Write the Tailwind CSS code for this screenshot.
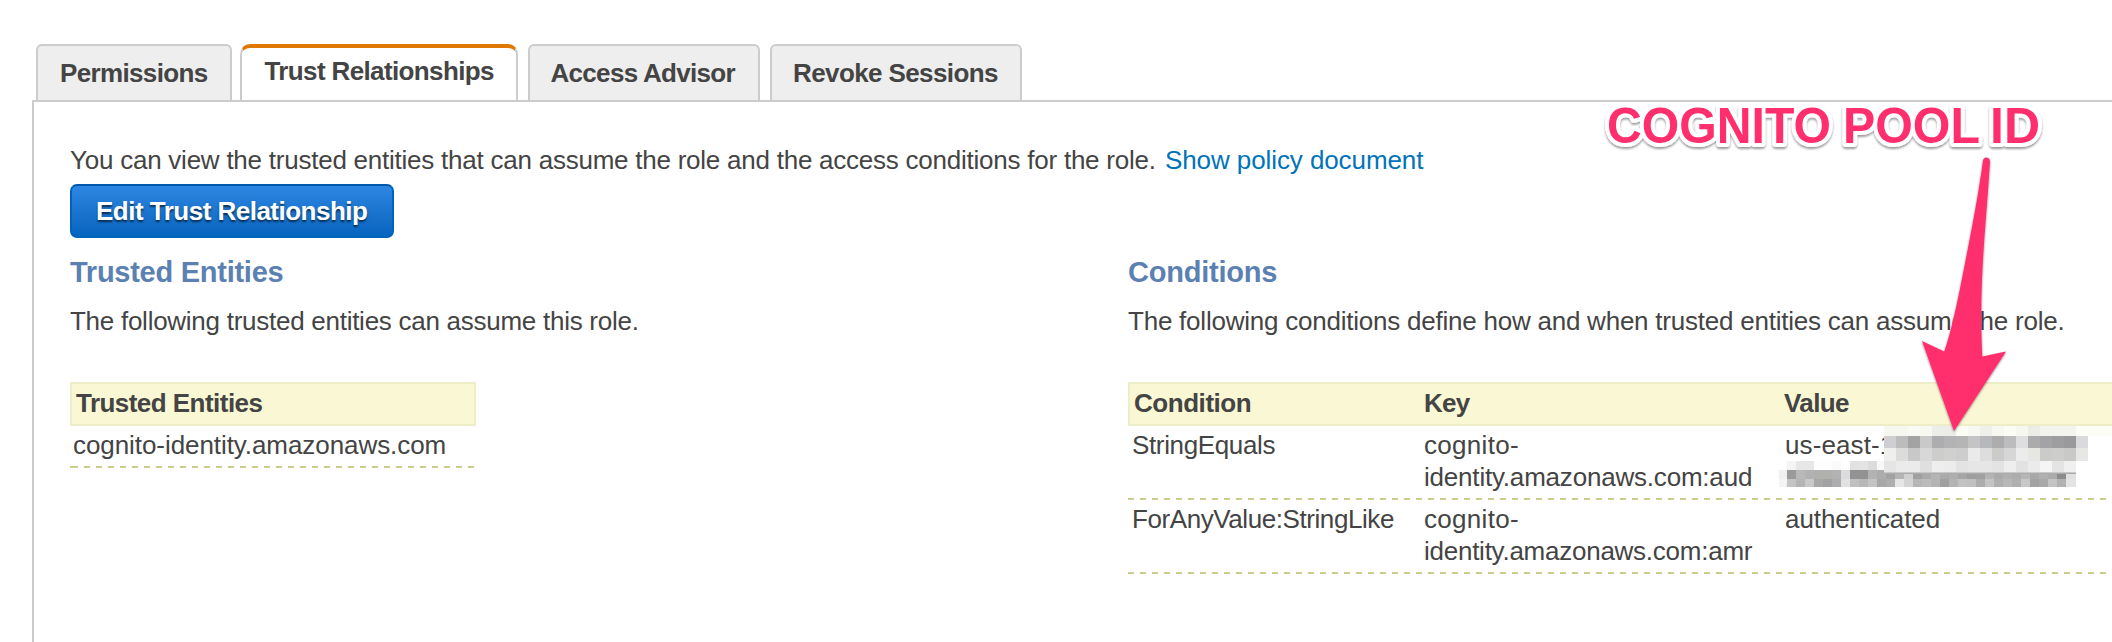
<!DOCTYPE html>
<html lang="en">
<head>
<meta charset="utf-8">
<title>Trust Relationships</title>
<script src="https://cdn.jsdelivr.net/npm/@tailwindcss/browser@4"></script>
</head>
<body class="relative h-[642px] w-[2112px] overflow-hidden bg-white font-['Liberation_Sans',Arial,sans-serif] text-[26px] leading-8 text-[#444444]">
<div class="flex h-full flex-col pt-[44px] pl-8">
  <nav class="flex h-14 shrink-0 pl-1 font-bold whitespace-nowrap">
    <a class="mr-2 w-[196px] rounded-t-[6px] border-2 border-b-0 border-[#cccccc] bg-[#eeeeee] pt-[11px] pl-[22px] tracking-[-0.647px]">Permissions</a>
    <a class="mr-2.5 w-[278px] rounded-t-[10px] border-x-2 border-t-4 border-x-[#cccccc] border-t-[#e07700] bg-white pt-[7px] pl-[22.5px] tracking-[-0.628px]">Trust Relationships</a>
    <a class="mr-2.5 w-[232px] rounded-t-[6px] border-2 border-b-0 border-[#cccccc] bg-[#eeeeee] pt-[11px] pl-[20.5px] tracking-[-0.691px]">Access Advisor</a>
    <a class="w-[252px] rounded-t-[6px] border-2 border-b-0 border-[#cccccc] bg-[#eeeeee] pt-[11px] pl-[21px] tracking-[-0.602px]">Revoke Sessions</a>
  </nav>

  <main class="grow border-t-2 border-l-2 border-[#cccccc] pt-[42px] pl-9 whitespace-nowrap">
    <div class="flex">
      <p class="w-[1095px] tracking-[-0.238px]">You can view the trusted entities that can assume the role and the access conditions for the role.</p>
      <a class="tracking-[-0.09px] text-[#0073bb]">Show policy document</a>
    </div>
    <button class="mt-2 block h-[54px] w-[324px] rounded-[7px] border-2 border-[#0064bf] border-t-[#0058ad] bg-linear-to-b from-[#2d87e2] to-[#0464be] pl-[24px] text-left font-bold tracking-[-0.511px] text-white [text-shadow:0_2px_2px_rgba(0,0,0,0.6)]">Edit Trust Relationship</button>

    <div class="mt-[18px] grid grid-cols-[1058px_1000px]">
      <section>
        <h2 class="text-[29px] leading-8 font-bold tracking-[-0.26px] text-[#5b80b2]">Trusted Entities</h2>
        <p class="mt-[17px] tracking-[-0.265px]">The following trusted entities can assume this role.</p>
        <div class="mt-[45px] w-[406px]">
          <div class="h-11 border-2 border-[#ededc8] bg-[#faf8d4] pt-[3px] pl-1 font-bold tracking-[-0.539px]">Trusted Entities</div>
          <div class="pt-[3px] pb-[5px] pl-[3px] tracking-[-0.07px]">cognito-identity.amazonaws.com</div>
          <div class="h-0.5 w-[404px] border-l-2 border-[#cccc8f] bg-[repeating-linear-gradient(90deg,#cccc8f_0_6px,transparent_6px_12px)] bg-no-repeat"></div>
        </div>
      </section>

      <section>
        <h2 class="text-[29px] leading-8 font-bold tracking-[-0.22px] text-[#5b80b2]">Conditions</h2>
        <p class="mt-[17px] tracking-[-0.23px]">The following conditions define how and when trusted entities can assume the role.</p>
        <div class="mt-[45px] w-[1000px]">
          <div class="grid h-11 grid-cols-[292px_358px_1fr] border-2 border-[#ededc8] bg-[#faf8d4] pt-[3px] pl-[3px] font-bold">
            <div class="pl-px tracking-[-0.451px]">Condition</div>
            <div class="-ml-px tracking-[-0.7px]">Key</div>
            <div class="pl-px tracking-[-0.618px]">Value</div>
          </div>
          <div class="grid grid-cols-[296px_361px_1fr] pt-[3px] pb-[5px]">
            <div class="pl-1 tracking-[-0.356px]">StringEquals</div>
            <div><span class="tracking-[0.3px]">cognito-</span><br><span class="tracking-[-0.2px]">identity.amazonaws.com:aud</span></div>
            <div class="tracking-[0.105px]">us-east-1</div>
          </div>
          <div class="h-0.5 bg-[repeating-linear-gradient(90deg,#cccc8f_0_6px,transparent_6px_12px)]"></div>
          <div class="grid grid-cols-[296px_361px_1fr] pt-[3px] pb-[5px]">
            <div class="pl-1 tracking-[-0.42px]">ForAnyValue:StringLike</div>
            <div><span class="tracking-[0.3px]">cognito-</span><br><span class="tracking-[-0.252px]">identity.amazonaws.com:amr</span></div>
            <div class="tracking-[-0.08px]">authenticated</div>
          </div>
          <div class="h-0.5 bg-[repeating-linear-gradient(90deg,#cccc8f_0_6px,transparent_6px_12px)]"></div>
        </div>
      </section>
    </div>
  </main>
</div>

<!-- Annotation layer: redaction mosaic, callout arrow and label -->
<svg class="pointer-events-none absolute top-0 left-0" width="2112" height="642" viewBox="0 0 2112 642">
  <defs>
    <filter id="arrowShadow" x="-20%" y="-10%" width="140%" height="120%"><feDropShadow dx="0" dy="1" stdDeviation="1.2" flood-color="#000" flood-opacity="0.5"/></filter>
    <filter id="labelShadow" x="-5%" y="-30%" width="110%" height="170%"><feDropShadow dx="0" dy="2" stdDeviation="1.2" flood-color="#000" flood-opacity="0.4"/></filter>
  </defs>
  <g id="mosaic" shape-rendering="crispEdges"></g>
  <path filter="url(#arrowShadow)" fill="#ff2e6d" d="M1983 160.500C1983.600 156.200 1990 156.600 1990 161.500C1987.800 200 1983.500 240 1982 280C1981 306 1981 330 1982.300 356.500L2006 351.500L1954 431L1922 341L1944.300 351.500C1951 332 1957 304 1961.700 280C1970 238 1978 198 1983 160.500Z"/>
  <text y="142.500" font-family="'Liberation Sans',Arial,sans-serif" font-weight="bold" font-size="50" fill="#ff2e6d" stroke="#fff" stroke-width="8" stroke-linejoin="round" paint-order="stroke" filter="url(#labelShadow)"><tspan x="1607" textLength="224" lengthAdjust="spacingAndGlyphs">COGNITO</tspan><tspan x="1843" textLength="137" lengthAdjust="spacingAndGlyphs">POOL</tspan><tspan x="1990" textLength="50" lengthAdjust="spacingAndGlyphs">ID</tspan></text>
</svg>
<script>
const g = document.getElementById('mosaic');
function row(x, y, w, h, cells) {
  cells.split(' ').forEach((c, i) => {
    const r = document.createElementNS('http://www.w3.org/2000/svg', 'rect');
    r.setAttribute('x', x + i * w); r.setAttribute('y', y);
    r.setAttribute('width', w); r.setAttribute('height', h);
    r.setAttribute('fill', '#' + (c.length === 2 ? c + c + c : c));
    g.appendChild(r);
  });
}
row(1787, 461, 9, 9, 'f4 e7 e7 fd fd fa ff e2 e4 dc f8');
row(1779, 470, 8, 9, 'f0');
row(1787, 470, 9, 9, '9a b8 b2 b0b0ac b0b0ac b2 dcdcdf 92 92 b2 ac a2 b4 d0 a0 aa b4 aa ae a6 9e a0 b4 aa b0 ac b6 a8 b0 aa 8c e0');
row(1779, 479, 8, 8, 'f4');
row(1787, 479, 9, 8, 'c4 b4 c8 a8 a2 acacaf e2 c0 b8 c4 a8 ae e6 d4 b6 bc b4 a0 b4 c2 c0 ac c4 b0 b8 b0 c8 a2 a8 c4 b2 e4');
row(2075, 470, 1, 17, 'e2');
row(1884, 426, 12, 10, 'f6f7ee f6f7ee f9faf5 f7f8f0 ecede9 ecede9 fcfdf4 f7f8f2 eff0ea f7f8f0 fbfcf4 f6f7ee ebede6 f3f4ee f3f4ee f3f4ee fcfdf5 fcfdf5 fcfdf5');
row(1884, 436, 12, 12, 'cfcfd2 bc a3 c9 adadb0 b3b3b6 b5 c4 b7b8bb ad bcbcbf dedee1 ab a3a3a6 9e9ea0 9a9a9c dadadd');
row(1884, 448, 12, 13, 'efefed dcdcda c8 d8 cdcdcb d0d0ce cd ea dd cbcbc9 d6 ec e6e6e3 cbcbc9 cdcdcb c9c9c7 e7e7e5');
row(1884, 461, 12, 11, 'e5 eb eb df ee ec e3 e6 e6 e3 ee e2 eb f5 e4 f0');
row(1884, 472, 192, 1, 'c8');
row(1884, 473, 192, 1, 'ac');
</script>
</body>
</html>
